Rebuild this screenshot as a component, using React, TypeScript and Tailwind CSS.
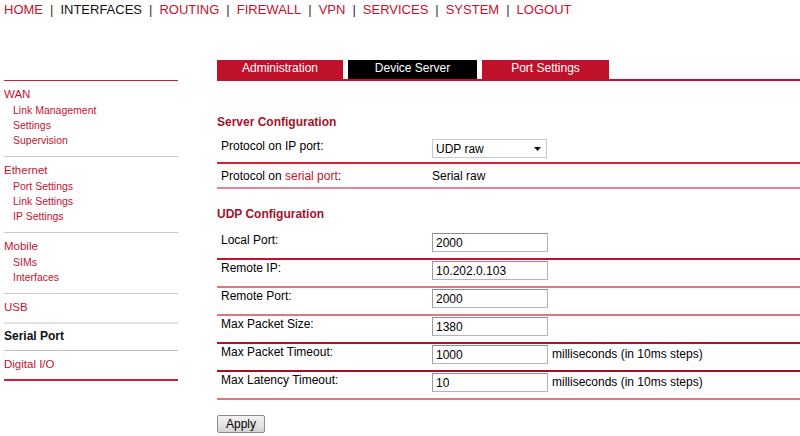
const navItems = [
  { label: "HOME", active: false },
  { label: "INTERFACES", active: true },
  { label: "ROUTING", active: false },
  { label: "FIREWALL", active: false },
  { label: "VPN", active: false },
  { label: "SERVICES", active: false },
  { label: "SYSTEM", active: false },
  { label: "LOGOUT", active: false },
];

type SideGroup = {
  title: string;
  items: string[];
  active?: boolean;
  line: string;
};

const sideGroups: SideGroup[] = [
  { title: "WAN", items: ["Link Management", "Settings", "Supervision"], line: "border-b border-[#c8c8d0]" },
  { title: "Ethernet", items: ["Port Settings", "Link Settings", "IP Settings"], line: "border-b border-[#c8c8d0]" },
  { title: "Mobile", items: ["SIMs", "Interfaces"], line: "border-b border-[#c8c8d0]" },
  { title: "USB", items: [], line: "border-b-2 border-[#e2e2e8]" },
  { title: "Serial Port", items: [], active: true, line: "border-b border-[#c0c0c8]" },
  { title: "Digital I/O", items: [], line: "border-b-2 border-[#d01f33]" },
];

const udpRows = [
  { label: "Local Port:", value: "2000", line: "border-[#c8102e]" },
  { label: "Remote IP:", value: "10.202.0.103", line: "border-[#e07585]" },
  { label: "Remote Port:", value: "2000", line: "border-[#e07585]" },
  { label: "Max Packet Size:", value: "1380", line: "border-[#b0102a]" },
  { label: "Max Packet Timeout:", value: "1000", unit: "milliseconds (in 10ms steps)", line: "border-[#a0101f]" },
  { label: "Max Latency Timeout:", value: "10", unit: "milliseconds (in 10ms steps)", line: "border-[#e07585]" },
];

function TextBox({ value }: { value: string }) {
  return (
    <div className="flex h-[19px] w-[116px] items-center border border-[#b4b4bc] border-t-[#8c8c94] border-l-[#9c9ca4] bg-white pl-[3px] text-[12px] text-black">
      {value}
    </div>
  );
}

export default function App() {
  return (
    <div className="min-h-[436px] w-[800px] bg-white font-['Liberation_Sans',Arial,sans-serif] text-black">
      {/* top navigation */}
      <div className="flex h-[20px] items-start pl-[4px] pt-[2px] text-[13px] leading-[16px]">
        {navItems.map((item, i) => (
          <div key={item.label} className="flex">
            {i > 0 ? <span className="mx-[7px] text-[#3a2a3a]">|</span> : null}
            <span className={item.active ? "text-[#111]" : "text-[#c8102e]"}>{item.label}</span>
          </div>
        ))}
      </div>

      <div className="flex">
        {/* sidebar */}
        <div className="ml-[4px] w-[174px] pt-[60px]">
          <div className="border-t border-[#d01f33]" />
          {sideGroups.map((group) => (
            <div
              key={group.title}
              className={`${group.line} ${group.items.length ? "pb-[8px] pt-[6px]" : group.active ? "pb-[6px] pt-[5px]" : "pb-[7px] pt-[6px]"}`}
            >
              <div
                className={`leading-[15px] ${
                  group.active ? "text-[12px] font-bold text-[#111]" : "text-[11.5px] text-[#c41230]"
                } ${group.items.length ? "mb-[1px]" : ""}`}
              >
                {group.title}
              </div>
              {group.items.map((item) => (
                <div key={item} className="pl-[9px] text-[10.5px] leading-[15px] text-[#c41230]">
                  {item}
                </div>
              ))}
            </div>
          ))}
        </div>

        {/* content */}
        <div className="ml-[39px] flex-1 pt-[40px]">
          <div className="flex gap-[5px] border-b-2 border-[#c8102e]">
            <div className="flex h-[19px] w-[126px] justify-center bg-[#c0112b] pt-[1px] text-[12px] leading-[15px] text-white">
              Administration
            </div>
            <div className="flex h-[19px] w-[129px] justify-center bg-black pt-[1px] text-[12px] leading-[15px] text-white">
              Device Server
            </div>
            <div className="flex h-[19px] w-[127px] justify-center bg-[#c0112b] pt-[1px] text-[12px] leading-[15px] text-white">
              Port Settings
            </div>
          </div>

          <div className="mt-[34px] text-[12px] font-bold leading-[15px] text-[#a3132b]">Server Configuration</div>

          <div className="mt-[8px] flex items-start border-b-2 border-[#d42234] pb-[4px] pt-[1px] text-[12px]">
            <div className="w-[215px] pl-[4px] leading-[15px]">Protocol on IP port:</div>
            <div className="flex h-[19px] w-[115px] items-center justify-between border border-[#c8c8d0] bg-white pl-[3px] pr-[5px] text-[12px]">
              <span>UDP raw</span>
              <svg width="7" height="4" viewBox="0 0 7 4">
                <path d="M0 0h7L3.5 4z" fill="#111" />
              </svg>
            </div>
          </div>

          <div className="flex items-start border-b-2 border-[#e08595] pb-[3px] pt-[5px] text-[12px] leading-[15px]">
            <div className="w-[215px] pl-[4px]">
              Protocol on <span className="text-[#c8102e]">serial port</span>:
            </div>
            <div>Serial raw</div>
          </div>

          <div className="mt-[18px] text-[12px] font-bold leading-[15px] text-[#a3132b]">UDP Configuration</div>

          <div className="mt-[10px]">
            {udpRows.map((row) => (
              <div key={row.label} className={`flex items-start border-b-2 ${row.line} pb-[6px] pt-[1px] text-[12px]`}>
                <div className="w-[215px] pl-[4px] leading-[15px]">{row.label}</div>
                <TextBox value={row.value} />
                {row.unit ? <div className="ml-[4px] pt-[2px] leading-[15px]">{row.unit}</div> : null}
              </div>
            ))}
          </div>

          <button
            type="button"
            className="mt-[15px] h-[18px] w-[48px] rounded-[2px] border border-[#8a8a8a] bg-gradient-to-b from-[#f4f4f4] to-[#d4d4d4] text-[12px] leading-[15px] text-black"
          >
            Apply
          </button>
        </div>
      </div>
    </div>
  );
}
